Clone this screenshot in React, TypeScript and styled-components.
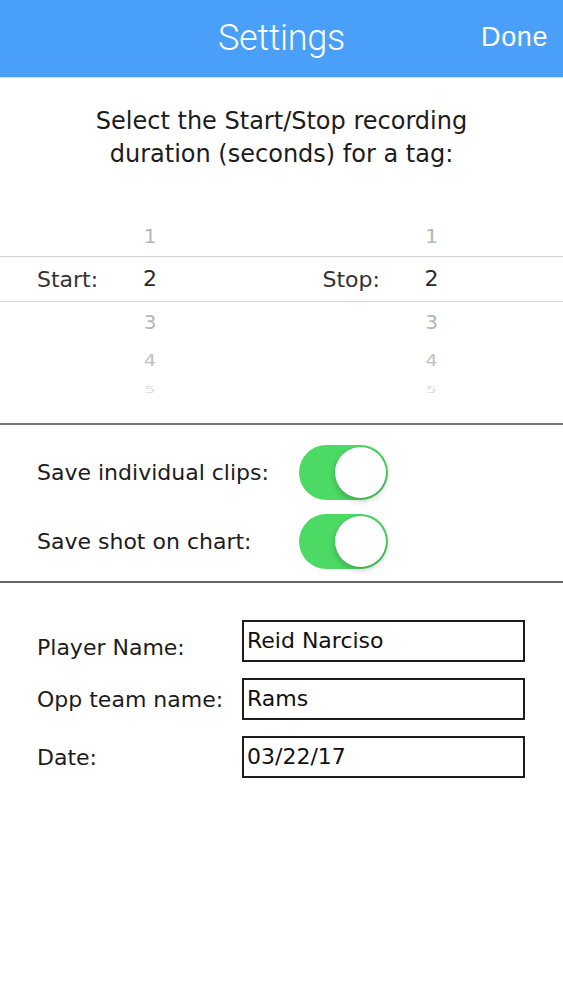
import React from 'react'
import styled, { createGlobalStyle } from 'styled-components'

const GlobalStyle = createGlobalStyle`
  html, body {
    margin: 0;
    padding: 0;
    background: #fff;
  }
  body {
    font-family: "DejaVu Sans", "Liberation Sans", sans-serif;
    color: #222;
  }
`

const Page = styled.div`
  width: 563px;
  min-height: 1000px;
  background: #fff;
`

const NavBar = styled.header`
  height: 77px;
  background: #4a9ff8;
  border-bottom: 1px solid #d6e6f7;
  display: grid;
  grid-template-columns: 1fr auto 1fr;
  align-items: center;
`

const NavTitle = styled.h1`
  grid-column: 2;
  margin: 0;
  font-family: Roboto, "Liberation Sans", sans-serif;
  font-weight: 300;
  font-size: 36px;
  color: #fff;
  letter-spacing: -0.3px;
  padding-bottom: 2px;
`

const NavButton = styled.button`
  grid-column: 3;
  justify-self: end;
  margin-right: 15px;
  border: 0;
  background: none;
  color: #fff;
  font-family: "Liberation Sans", Arial, sans-serif;
  font-size: 27px;
  letter-spacing: 0.6px;
  padding: 0 0 2px;
`

const Prompt = styled.p`
  margin: 0;
  padding-top: 27px;
  text-align: center;
  font-size: 24px;
  line-height: 33px;
  color: #1c1c1c;
`

const Picker = styled.div`
  margin-top: 45px;
  height: 207px;
  border-bottom: 2px solid #777;
`

const PickerRow = styled.div<{ $h: number; $selected?: boolean }>`
  height: ${p => p.$h}px;
  display: grid;
  grid-template-columns: 1fr 1fr;
  align-items: center;
  border-top: ${p => (p.$selected ? '1px solid #d4d4d4' : '0')};
  border-bottom: ${p => (p.$selected ? '1px solid #d4d4d4' : '0')};
  box-sizing: border-box;
`

const PickerCell = styled.div<{ $pad: number }>`
  display: grid;
  grid-template-columns: ${p => 130 - p.$pad}px 40px;
  padding-left: ${p => p.$pad}px;
  align-items: center;
`

const PickerLabel = styled.span`
  font-size: 22px;
  color: #333;
`

const PickerValue = styled.span<{ $size: number; $color: string; $scale: number }>`
  text-align: center;
  font-size: ${p => p.$size}px;
  color: ${p => p.$color};
  transform: scaleY(${p => p.$scale});
  line-height: 1;
`

const Toggles = styled.section`
  padding: 19px 0 12px 37px;
  display: flex;
  flex-direction: column;
  gap: 13px;
  border-bottom: 2px solid #666;
`

const ToggleRow = styled.div`
  display: grid;
  grid-template-columns: 262px auto;
  align-items: center;
  height: 56px;
`

const RowLabel = styled.span<{ $drop?: number }>`
  font-size: 22px;
  color: #1c1c1c;
  padding-top: ${p => p.$drop ?? 0}px;
`

const Switch = styled.div<{ $on: boolean }>`
  position: relative;
  width: 89px;
  height: 55px;
  border-radius: 28px;
  background: ${p => (p.$on ? '#4cd964' : '#e5e5e5')};
`

const Knob = styled.div<{ $on: boolean }>`
  position: absolute;
  top: 2px;
  left: ${p => (p.$on ? '36px' : '2px')};
  width: 51px;
  height: 51px;
  border-radius: 50%;
  background: #fff;
  box-shadow: 0 3px 6px rgba(0, 0, 0, 0.22), 0 0 1px rgba(0, 0, 0, 0.15);
`

const Fields = styled.section`
  padding: 37px 38px 0 37px;
  display: flex;
  flex-direction: column;
  gap: 16px;
`

const FieldRow = styled.label`
  display: grid;
  grid-template-columns: 205px 1fr;
  align-items: center;
`

const FieldInput = styled.input`
  box-sizing: border-box;
  height: 42px;
  width: 100%;
  border: 2px solid #1e1e1e;
  border-radius: 0;
  padding: 0 0 2px 3px;
  font-family: "DejaVu Sans", "Liberation Sans", sans-serif;
  font-size: 22px;
  color: #111;
  background: #fff;
  outline: none;
`

type WheelItem = { value: string; h: number; size: number; color: string; scale: number; selected?: boolean }

const wheel: WheelItem[] = [
  { value: '1', h: 40, size: 20, color: '#b5b5b5', scale: 1 },
  { value: '2', h: 46, size: 22, color: '#2a2a2a', scale: 1, selected: true },
  { value: '3', h: 40, size: 20, color: '#b5b5b5', scale: 0.95 },
  { value: '4', h: 36, size: 19, color: '#c2c2c2', scale: 0.8 },
  { value: '5', h: 24, size: 18, color: '#dedede', scale: 0.5 },
]

const Toggle = ({ on }: { on: boolean }) => (
  <Switch $on={on}>
    <Knob $on={on} />
  </Switch>
)

export default function App() {
  return (
    <Page>
      <GlobalStyle />
      <NavBar>
        <NavTitle>Settings</NavTitle>
        <NavButton>Done</NavButton>
      </NavBar>

      <Prompt>
        Select the Start/Stop recording
        <br />
        duration (seconds) for a tag:
      </Prompt>

      <Picker>
        {wheel.map(item => (
          <PickerRow key={item.value} $h={item.h} $selected={item.selected}>
            {[
              { label: 'Start:', pad: 37 },
              { label: 'Stop:', pad: 41 },
            ].map(col => (
              <PickerCell key={col.label} $pad={col.pad}>
                <PickerLabel>{item.selected ? col.label : ''}</PickerLabel>
                <PickerValue $size={item.size} $color={item.color} $scale={item.scale}>
                  {item.value}
                </PickerValue>
              </PickerCell>
            ))}
          </PickerRow>
        ))}
      </Picker>

      <Toggles>
        <ToggleRow>
          <RowLabel>Save individual clips:</RowLabel>
          <Toggle on />
        </ToggleRow>
        <ToggleRow>
          <RowLabel>Save shot on chart:</RowLabel>
          <Toggle on />
        </ToggleRow>
      </Toggles>

      <Fields>
        <FieldRow>
          <RowLabel $drop={12}>Player Name:</RowLabel>
          <FieldInput readOnly value="Reid Narciso" />
        </FieldRow>
        <FieldRow>
          <RowLabel>Opp team name:</RowLabel>
          <FieldInput readOnly value="Rams" />
        </FieldRow>
        <FieldRow>
          <RowLabel>Date:</RowLabel>
          <FieldInput readOnly value="03/22/17" />
        </FieldRow>
      </Fields>
    </Page>
  )
}
